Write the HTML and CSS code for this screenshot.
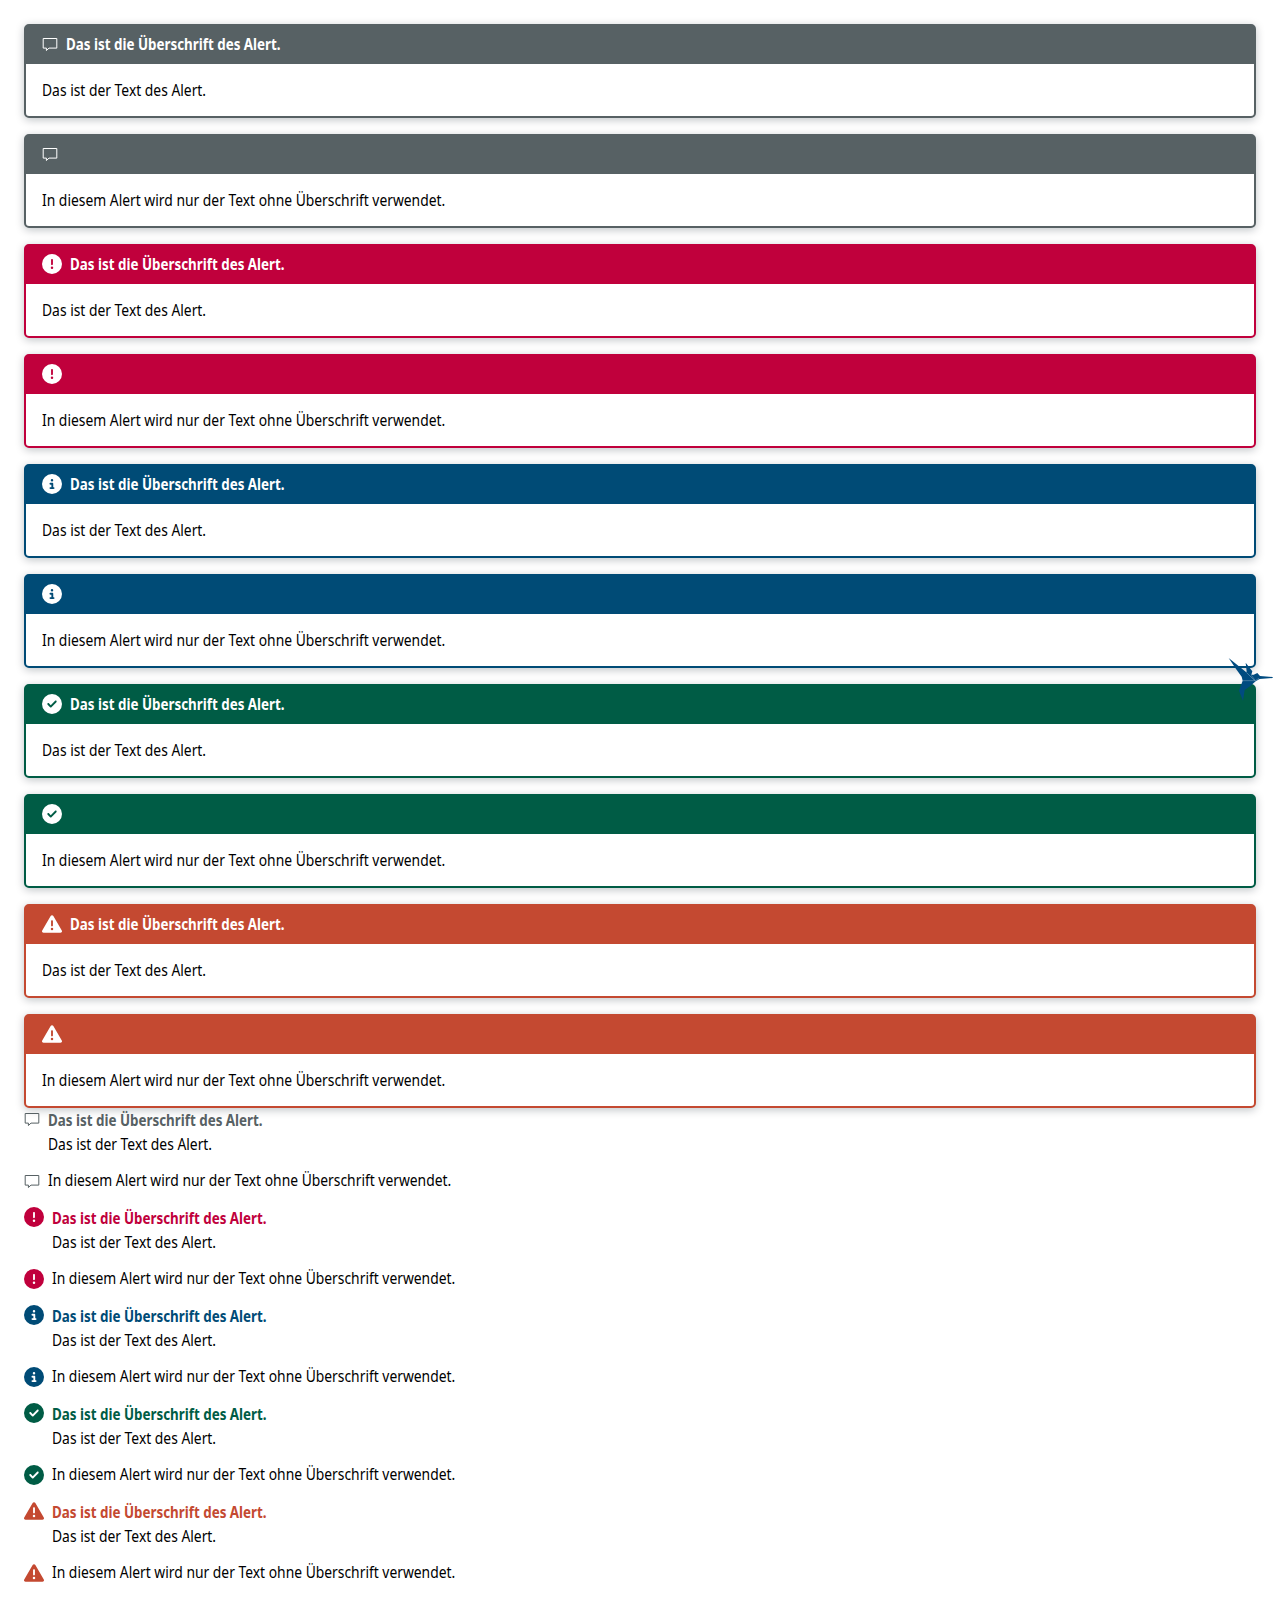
FILE: index.html
```
<!DOCTYPE html>
<html lang="de">
<head>
<meta charset="utf-8">
<title>Alert</title>
<link rel="stylesheet" href="styles.css">
</head>
<body>
<svg class="sprite" aria-hidden="true">
  <symbol id="comment" viewBox="0 0 16 20"><path d="M1.200 4.500h13.600v9.600H7l-2.600 2.400v-2.400H1.200z" fill="none" stroke="currentColor" stroke-width="1"/></symbol>
  <symbol id="error" viewBox="0 0 512 512"><path fill="currentColor" d="M256 512A256 256 0 1 0 256 0a256 256 0 1 0 0 512zm0-384c13.300 0 24 10.700 24 24V264c0 13.300-10.700 24-24 24s-24-10.700-24-24V152c0-13.300 10.700-24 24-24zM224 352a32 32 0 1 1 64 0 32 32 0 1 1-64 0z"/></symbol>
  <symbol id="info" viewBox="0 0 512 512"><path fill="currentColor" d="M256 512A256 256 0 1 0 256 0a256 256 0 1 0 0 512zM216 336h24V272H216c-13.300 0-24-10.700-24-24s10.700-24 24-24h48c13.300 0 24 10.700 24 24v88h8c13.300 0 24 10.700 24 24s-10.700 24-24 24H216c-13.300 0-24-10.700-24-24s10.700-24 24-24zm40-208a32 32 0 1 1 0 64 32 32 0 1 1 0-64z"/></symbol>
  <symbol id="success" viewBox="0 0 512 512"><path fill="currentColor" d="M256 512A256 256 0 1 0 256 0a256 256 0 1 0 0 512zM369 209L241 337c-9.400 9.400-24.600 9.400-33.900 0l-64-64c-9.400-9.400-9.400-24.600 0-33.900s24.600-9.400 33.900 0l47 47L335 175c9.400-9.400 24.600-9.400 33.900 0s9.400 24.600 0 33.900z"/></symbol>
  <symbol id="warning" viewBox="0 0 512 512"><path fill="currentColor" d="M256 32c14.200 0 27.300 7.500 34.500 19.800l216 368c7.300 12.400 7.300 27.700 .2 40.100S486.300 480 472 480H40c-14.300 0-27.600-7.700-34.700-20.100s-7-27.800 .2-40.100l216-368C228.700 39.500 241.800 32 256 32zm0 128c-13.300 0-24 10.700-24 24V296c0 13.300 10.700 24 24 24s24-10.700 24-24V184c0-13.300-10.700-24-24-24zm32 224a32 32 0 1 0-64 0 32 32 0 1 0 64 0z"/></symbol>
</svg>

<main class="page">
  <section class="cards">
    <article class="card neutral"><header class="card-head"><svg class="icon comment"><use href="#comment"/></svg><b class="title">Das ist die Überschrift des Alert.</b></header><div class="card-body"><span class="text">Das ist der Text des Alert.</span></div></article>
    <article class="card neutral"><header class="card-head"><svg class="icon comment"><use href="#comment"/></svg></header><div class="card-body"><span class="text">In diesem Alert wird nur der Text ohne Überschrift verwendet.</span></div></article>
    <article class="card error"><header class="card-head"><svg class="icon"><use href="#error"/></svg><b class="title">Das ist die Überschrift des Alert.</b></header><div class="card-body"><span class="text">Das ist der Text des Alert.</span></div></article>
    <article class="card error"><header class="card-head"><svg class="icon"><use href="#error"/></svg></header><div class="card-body"><span class="text">In diesem Alert wird nur der Text ohne Überschrift verwendet.</span></div></article>
    <article class="card info"><header class="card-head"><svg class="icon"><use href="#info"/></svg><b class="title">Das ist die Überschrift des Alert.</b></header><div class="card-body"><span class="text">Das ist der Text des Alert.</span></div></article>
    <article class="card info"><header class="card-head"><svg class="icon"><use href="#info"/></svg></header><div class="card-body"><span class="text">In diesem Alert wird nur der Text ohne Überschrift verwendet.</span></div></article>
    <article class="card success"><header class="card-head"><svg class="icon"><use href="#success"/></svg><b class="title">Das ist die Überschrift des Alert.</b></header><div class="card-body"><span class="text">Das ist der Text des Alert.</span></div></article>
    <article class="card success"><header class="card-head"><svg class="icon"><use href="#success"/></svg></header><div class="card-body"><span class="text">In diesem Alert wird nur der Text ohne Überschrift verwendet.</span></div></article>
    <article class="card warning"><header class="card-head"><svg class="icon"><use href="#warning"/></svg><b class="title">Das ist die Überschrift des Alert.</b></header><div class="card-body"><span class="text">Das ist der Text des Alert.</span></div></article>
    <article class="card warning"><header class="card-head"><svg class="icon"><use href="#warning"/></svg></header><div class="card-body"><span class="text">In diesem Alert wird nur der Text ohne Überschrift verwendet.</span></div></article>
  </section>

  <section class="inlines">
    <div class="inline neutral"><svg class="icon comment"><use href="#comment"/></svg><div class="lines"><b class="title">Das ist die Überschrift des Alert.</b><span class="text">Das ist der Text des Alert.</span></div></div>
    <div class="inline single neutral"><svg class="icon comment"><use href="#comment"/></svg><span class="text">In diesem Alert wird nur der Text ohne Überschrift verwendet.</span></div>
    <div class="inline error"><svg class="icon"><use href="#error"/></svg><div class="lines"><b class="title">Das ist die Überschrift des Alert.</b><span class="text">Das ist der Text des Alert.</span></div></div>
    <div class="inline single error"><svg class="icon"><use href="#error"/></svg><span class="text">In diesem Alert wird nur der Text ohne Überschrift verwendet.</span></div>
    <div class="inline info"><svg class="icon"><use href="#info"/></svg><div class="lines"><b class="title">Das ist die Überschrift des Alert.</b><span class="text">Das ist der Text des Alert.</span></div></div>
    <div class="inline single info"><svg class="icon"><use href="#info"/></svg><span class="text">In diesem Alert wird nur der Text ohne Überschrift verwendet.</span></div>
    <div class="inline success"><svg class="icon"><use href="#success"/></svg><div class="lines"><b class="title">Das ist die Überschrift des Alert.</b><span class="text">Das ist der Text des Alert.</span></div></div>
    <div class="inline single success"><svg class="icon"><use href="#success"/></svg><span class="text">In diesem Alert wird nur der Text ohne Überschrift verwendet.</span></div>
    <div class="inline warning"><svg class="icon"><use href="#warning"/></svg><div class="lines"><b class="title">Das ist die Überschrift des Alert.</b><span class="text">Das ist der Text des Alert.</span></div></div>
    <div class="inline single warning"><svg class="icon"><use href="#warning"/></svg><span class="text">In diesem Alert wird nur der Text ohne Überschrift verwendet.</span></div>
  </section>
</main>

<svg class="bird" viewBox="0 0 150 150" aria-hidden="true">
  <path fill="#004b80" d="M11 12L63 54L65 53L62 26L82 52L79 62L86 62L97 57L105 66L143 69V72L104 75L92 82L75 97L59 108L54 140L42 110L53 80L50 68L31 42z"/>
  <path d="M51 80L90 80M64 55L89 80M79 64L91 80L102 73" fill="none" stroke="#a9c4d6" stroke-width="1.200"/>
</svg>
</body>
</html>
```
FILE: styles.css
```
* { box-sizing: border-box; }

body {
  margin: 0;
  background: #fff;
  color: #000;
  font: 16px/24px "Noto Sans", "Open Sans", sans-serif;
}

.sprite { display: none; }

.page {
  height: 1606px;
  padding: 24px 24px 0;
}

.neutral { --tone: #576164; }
.error { --tone: #c0003c; }
.info { --tone: #004b76; }
.success { --tone: #005c45; }
.warning { --tone: #c44931; }

.title,
.text {
  display: block;
  width: max-content;
  transform-origin: left center;
  white-space: nowrap;
}
.text { transform: scaleX(.866); }
.title { transform: scaleX(.836); }

.icon {
  display: block;
  flex: none;
  width: 20px;
  height: 20px;
}
.icon.comment { width: 16px; }

.cards {
  display: flex;
  flex-direction: column;
  gap: 16px;
}

.card {
  height: 94px;
  border: 2px solid var(--tone);
  border-radius: 5px;
  background: #fff;
  box-shadow: 0 2px 8px rgba(0, 20, 30, .25);
}

.card-head {
  display: flex;
  align-items: flex-start;
  gap: 8px;
  height: 38px;
  padding: 6px 16px 8px;
  background: var(--tone);
  color: #fff;
}
.card-head .icon { margin-top: 2.4px; }

.card-body { padding: 14px 16px; }

.inline {
  display: flex;
  align-items: flex-start;
  gap: 8px;
  height: 60px;
}
.inline.single { height: 38px; }
.inline .icon { margin-top: 1.3px; color: var(--tone); }
.inline.single .icon { margin-top: 3.3px; }
.inline .icon.comment { margin-top: 1px; }
.inline.single .icon.comment { margin-top: 3px; }
.inline .title { color: var(--tone); }

/* floating logo in the bottom-right corner of the first screen */
.bird {
  position: absolute;
  top: 654px;
  left: 1225px;
  width: 50px;
  height: 50px;
}
```
